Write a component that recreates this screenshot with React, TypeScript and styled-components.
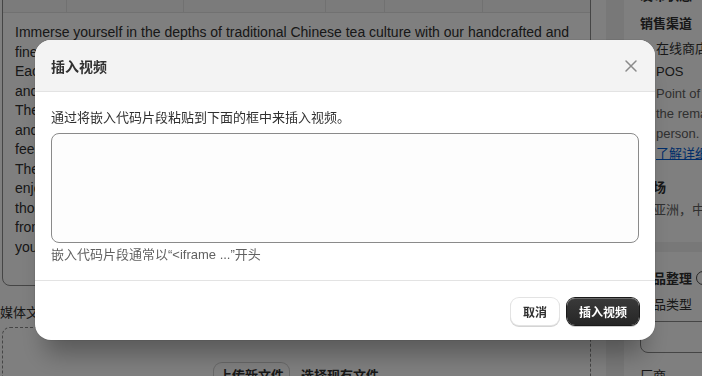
import styled, { createGlobalStyle } from "styled-components"

const GlobalStyle = createGlobalStyle`
    html, body {
        margin: 0;
        padding: 0;
        overflow: hidden;
        background: #f1f1f1;
    }
    body {
        font-family: "Liberation Sans", "Noto Sans CJK SC", sans-serif;
        color: #303030;
    }
`

const Layout = styled.div`
    display: flex;
    align-items: flex-start;
    gap: 18px;
    margin: -44px 0 0 -13px;
    width: 960px;
`
const MainCard = styled.div`
    width: 619px;
    flex: none;
    box-sizing: border-box;
    background: #fff;
    padding: 15px 15px 0;
    height: 480px;
`
const Editor = styled.div`
    border: 1px solid #8a8a8a;
    border-radius: 8px;
    overflow: hidden;
`
const Toolbar = styled.div`
    height: 40px;
    display: flex;
    background: #f7f7f7;
    border-bottom: 1px solid #e3e3e3;
`
const ToolGroup = styled.div<{ w: number }>`
    width: ${(p) => p.w}px;
    border-right: 1px solid #e3e3e3;
`
const EditorText = styled.div`
    padding: 10px 12px 28px;
    font-size: 14px;
    line-height: 19.5px;
    color: #303030;
    white-space: nowrap;
    overflow: hidden;
`
const Label = styled.div`
    margin-top: 17px;
    margin-left: -2px;
    font-size: 13px;
    line-height: 20px;
`
const DropZone = styled.div`
    margin-top: 4px;
    border: 1px dashed #8a8a8a;
    border-radius: 8px;
    height: 120px;
    display: flex;
    justify-content: center;
    align-items: flex-start;
    gap: 12px;
    padding-top: 35px;
    box-sizing: border-box;
`
const UploadButton = styled.div`
    padding: 0 5px;
    height: 26px;
    line-height: 26px;
    font-size: 13px;
    font-weight: 700;
    border-radius: 8px;
    background: #fff;
    box-shadow: 0 0 0 1px #d0d0d0;
`
const PlainLink = styled.div`
    font-size: 13px;
    line-height: 26px;
    font-weight: 600;
`
const Side = styled.div`
    width: 300px;
    flex: none;
    display: flex;
    flex-direction: column;
    gap: 10px;
`
const SideCard = styled.div<{ pt: number; pb: number }>`
    background: #fff;
    border-radius: 12px;
    padding: ${(p) => p.pt}px 16px ${(p) => p.pb}px;
    font-size: 13px;
    line-height: 20px;
`
const Heading = styled.div<{ mt?: number }>`
    font-weight: 700;
    margin-top: ${(p) => p.mt ?? 0}px;
`
const Row = styled.div<{ mt?: number }>`
    margin-top: ${(p) => p.mt ?? 0}px;
`
const CheckRow = styled.div<{ mt?: number }>`
    display: flex;
    align-items: center;
    margin-top: ${(p) => p.mt ?? 0}px;
`
const Check = styled.span`
    width: 11px;
    height: 11px;
    margin-right: 5px;
    border-radius: 3px;
    background: #303030;
    flex: none;
`
const Muted = styled.div<{ indent?: boolean }>`
    color: #616161;
    padding-left: ${(p) => (p.indent ? 16 : 0)}px;
    margin-top: 2px;
`
const Link = styled.div`
    color: #005bd3;
    text-decoration: underline;
    padding-left: 16px;
`
const Input = styled.div`
    margin-top: 6px;
    height: 32px;
    border: 1px solid #8a8a8a;
    border-radius: 8px;
    box-sizing: border-box;
`
const InfoIcon = styled.span`
    display: inline-block;
    width: 12px;
    height: 12px;
    border: 1.5px solid #4a4a4a;
    border-radius: 50%;
    margin-left: 4px;
    vertical-align: -2px;
`

const Backdrop = styled.div`
    position: fixed;
    inset: 0;
    background: rgba(0, 0, 0, 0.5);
    display: flex;
    align-items: center;
    justify-content: center;
    padding: 4px 12px 0 0;
`
const Modal = styled.div`
    width: 620px;
    background: #fff;
    border-radius: 16px;
    overflow: hidden;
    box-shadow: 0 24px 24px -10px rgba(0, 0, 0, 0.3), 0 0 0 1px rgba(0, 0, 0, 0.06);
`
const Header = styled.div`
    height: 51px;
    background: #f3f3f3;
    border-bottom: 1px solid #e3e3e3;
    display: flex;
    align-items: center;
    justify-content: space-between;
    padding: 0 16px;
`
const Title = styled.h2`
    margin: 0;
    font-size: 14px;
    font-weight: 700;
    color: #303030;
`
const CloseButton = styled.button`
    border: none;
    background: none;
    padding: 0;
    width: 20px;
    height: 20px;
    margin-right: -2px;
    display: flex;
    align-items: center;
    justify-content: center;
    color: #8a8a8a;
`
const Body = styled.div`
    padding: 16px 16px 15px;
`
const BodyText = styled.p`
    margin: 0;
    font-size: 13px;
    line-height: 20px;
    color: #303030;
`
const TextArea = styled.textarea`
    display: block;
    margin-top: 5px;
    width: 100%;
    height: 110px;
    box-sizing: border-box;
    border: 1px solid #8a8a8a;
    border-radius: 8px;
    background: #fdfdfd;
    resize: none;
    outline: none;
    font: inherit;
`
const Help = styled.div`
    margin-top: 2px;
    font-size: 13px;
    line-height: 20px;
    color: #616161;
`
const Footer = styled.div`
    border-top: 1px solid #e3e3e3;
    padding: 17px 16px 15px;
    display: flex;
    justify-content: flex-end;
    gap: 8px;
`
const Button = styled.button<{ primary?: boolean }>`
    height: 27px;
    padding: 0 12px;
    border-radius: 8px;
    font-family: inherit;
    font-size: 12px;
    font-weight: 700;
    cursor: pointer;
    border: none;
    color: ${(p) => (p.primary ? "#fff" : "#303030")};
    background: ${(p) => (p.primary ? "linear-gradient(#3a3a3a, #262626)" : "#fff")};
    box-shadow: ${(p) =>
        p.primary
            ? "0 0 0 1px #1a1a1a, inset 0 1px 0 rgba(255,255,255,0.25), 0 2px 0 rgba(0,0,0,0.2)"
            : "0 0 0 1px #e3e3e3, 0 1px 0 1px #d4d4d4"};
`

const lines = [
    "Immerse yourself in the depths of traditional Chinese tea culture with our handcrafted and",
    "fine teas, sourced directly from the misty mountains of Yunnan and Fujian provinces.",
    "Each leaf is carefully picked by hand and processed using time-honored methods,",
    "and every cup carries the story of the land and the people who grew it.",
    "The rich aroma and layered flavors awaken the senses with every sip,",
    "and the gentle warmth brings a moment of calm to your busy day, letting you",
    "feel the harmony between nature and tradition.",
    "The set includes a porcelain teapot and cups, so you can",
    "enjoy an authentic tea ceremony at home or share it with friends,",
    "those you love, and anyone who appreciates the art of tea,",
    "from beginners to seasoned connoisseurs,",
    "your journey into Chinese tea starts here.",
]

export default function App() {
    return (
        <>
            <GlobalStyle />
            <Layout>
                <MainCard>
                    <Editor>
                        <Toolbar>
                            <ToolGroup w={63} />
                            <ToolGroup w={116} />
                            <ToolGroup w={141} />
                            <ToolGroup w={58} />
                            <ToolGroup w={97} />
                        </Toolbar>
                        <EditorText>
                            {lines.map((l) => (
                                <div key={l}>{l}</div>
                            ))}
                        </EditorText>
                    </Editor>
                    <Label>媒体文件</Label>
                    <DropZone>
                        <UploadButton>上传新文件</UploadButton>
                        <PlainLink>选择现有文件</PlainLink>
                    </DropZone>
                </MainCard>
                <Side>
                    <SideCard pt={30} pb={22}>
                        <Heading>发布状态</Heading>
                        <Heading mt={8}>销售渠道</Heading>
                        <CheckRow mt={5}>
                            <Check />在线商店
                        </CheckRow>
                        <CheckRow mt={3}>
                            <Check />POS
                        </CheckRow>
                        <Muted indent>
                            Point of Sale has not been set up. Finish
                            <br />
                            the remaining steps to start selling in
                            <br />
                            person.
                        </Muted>
                        <Link>了解详细信息</Link>
                        <Heading mt={14}>市场</Heading>
                        <Muted>东亚洲，中国和国际</Muted>
                    </SideCard>
                    <SideCard pt={17} pb={16}>
                        <Heading>
                            产品整理<InfoIcon />
                        </Heading>
                        <Row mt={6}>产品类型</Row>
                        <Input />
                        <Row mt={13}>厂商</Row>
                    </SideCard>
                </Side>
            </Layout>
            <Backdrop>
                <Modal>
                    <Header>
                        <Title>插入视频</Title>
                        <CloseButton aria-label="关闭">
                            <svg width="20" height="20" viewBox="0 0 20 20">
                                <path d="M5 5l10 10M15 5L5 15" stroke="currentColor" strokeWidth="1.5" strokeLinecap="round" />
                            </svg>
                        </CloseButton>
                    </Header>
                    <Body>
                        <BodyText>通过将嵌入代码片段粘贴到下面的框中来插入视频。</BodyText>
                        <TextArea />
                        <Help>嵌入代码片段通常以“&lt;iframe ...”开头</Help>
                    </Body>
                    <Footer>
                        <Button>取消</Button>
                        <Button primary>插入视频</Button>
                    </Footer>
                </Modal>
            </Backdrop>
        </>
    )
}
